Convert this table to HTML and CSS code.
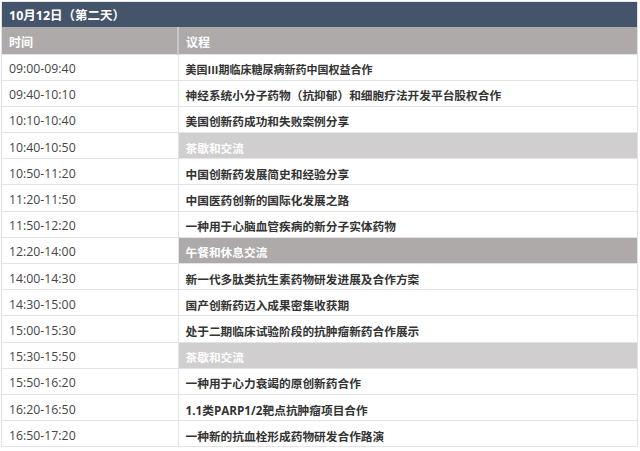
FILE: index.html
```html
<!DOCTYPE html>
<html lang="zh">
<head>
<meta charset="utf-8">
<link rel="stylesheet" href="styles.css">
</head>
<body>
<div class="schedule">
  <div class="day-title">10月12日（第二天）</div>
  <table class="agenda">
    <colgroup><col class="c-time"><col class="c-topic"></colgroup>
    <thead>
      <tr><th>时间</th><th>议程</th></tr>
    </thead>
    <tbody>
      <tr><td class="time">09:00-09:40</td><td class="topic compact">美国III期临床糖尿病新药中国权益合作</td></tr>
      <tr><td class="time">09:40-10:10</td><td class="topic">神经系统小分子药物（抗抑郁）和细胞疗法开发平台股权合作</td></tr>
      <tr><td class="time">10:10-10:40</td><td class="topic">美国创新药成功和失败案例分享</td></tr>
      <tr><td class="time">10:40-10:50</td><td class="topic brk-light">茶歇和交流</td></tr>
      <tr><td class="time">10:50-11:20</td><td class="topic">中国创新药发展简史和经验分享</td></tr>
      <tr><td class="time">11:20-11:50</td><td class="topic">中国医药创新的国际化发展之路</td></tr>
      <tr><td class="time">11:50-12:20</td><td class="topic">一种用于心脑血管疾病的新分子实体药物</td></tr>
      <tr><td class="time">12:20-14:00</td><td class="topic brk-dark">午餐和休息交流</td></tr>
      <tr><td class="time">14:00-14:30</td><td class="topic">新一代多肽类抗生素药物研发进展及合作方案</td></tr>
      <tr><td class="time">14:30-15:00</td><td class="topic">国产创新药迈入成果密集收获期</td></tr>
      <tr><td class="time">15:00-15:30</td><td class="topic">处于二期临床试验阶段的抗肿瘤新药合作展示</td></tr>
      <tr><td class="time">15:30-15:50</td><td class="topic brk-light">茶歇和交流</td></tr>
      <tr><td class="time">15:50-16:20</td><td class="topic">一种用于心力衰竭的原创新药合作</td></tr>
      <tr><td class="time">16:20-16:50</td><td class="topic">1.1类PARP1/2靶点抗肿瘤项目合作</td></tr>
      <tr><td class="time">16:50-17:20</td><td class="topic">一种新的抗血栓形成药物研发合作路演</td></tr>
    </tbody>
  </table>
</div>
</body>
</html>
```
FILE: styles.css
```css
html, body {
  margin: 0;
  padding: 0;
  background: #ffffff;
}
body {
  font-family: "Open Sans", "Noto Sans CJK SC", sans-serif;
  font-size: 12.3px;
  color: #3a3a3a;
}
.schedule {
  margin: 1px 0 0 1px;
  width: 637px;
  border-left: 1px solid #e2e2e2;
  border-right: 1px solid #e2e2e2;
  border-top: 1px solid #e8e8e8;
  box-sizing: border-box;
}
.day-title {
  background: #44546a;
  color: #ffffff;
  font-weight: 700;
  height: 25px;
  line-height: 25px;
  padding: 1px 0 0 7px;
  box-sizing: border-box;
  font-size: 12.5px;
}
.agenda {
  width: 100%;
  border-collapse: collapse;
  table-layout: fixed;
}
.c-time { width: 176px; }
.agenda th {
  background: #aeaaaa;
  color: #ffffff;
  font-weight: 700;
  text-align: left;
  height: 27px;
  padding: 3px 0 0 7px;
  box-sizing: border-box;
  font-size: 12px;
  border-left: 2px solid #c9c6c6;
  border-bottom: 1px solid #e6e6e6;
}
.agenda th:first-child { border-left: none; }
.agenda td {
  height: 26.2px;
  padding: 3px 0 0 7px;
  box-sizing: border-box;
  border-bottom: 1px solid #e4e4e4;
  border-left: 1px solid #e4e4e4;
  white-space: nowrap;
}
.agenda td:first-child { border-left: none; }
.time {
  color: #454545;
  font-weight: 400;
}
.topic {
  color: #333333;
  font-weight: 700;
  font-size: 11.7px;
}
.topic.compact {
  font-size: 11px;
}
.brk-light {
  background: #d0cece;
  color: #ffffff;
}
.brk-dark {
  background: #aeaaaa;
  color: #ffffff;
}
```
